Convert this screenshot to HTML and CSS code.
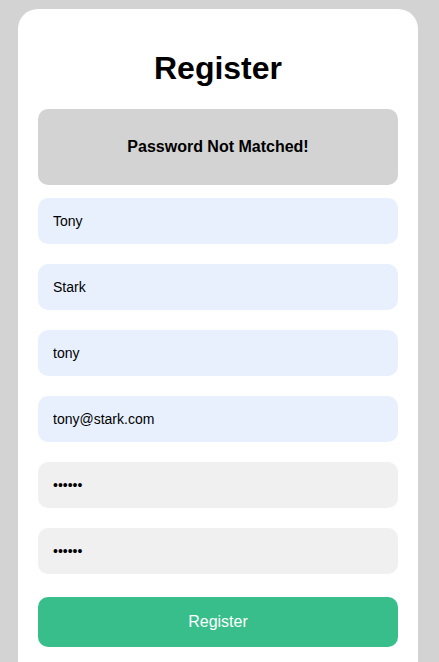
FILE: index.html
```html
<!DOCTYPE html>
<html>
<head>
<meta charset="utf-8">
<link rel="stylesheet" href="styles.css">
</head>
<body>
<div class="card">
  <h1 class="title">Register</h1>
  <div class="alert">Password Not Matched!</div>
  <form class="form">
    <input class="field filled" type="text" value="Tony">
    <input class="field filled" type="text" value="Stark">
    <input class="field filled" type="text" value="tony">
    <input class="field filled" type="email" value="tony@stark.com">
    <input class="field" type="password" value="tonyst">
    <input class="field" type="password" value="tonyst">
    <button class="btn" type="button">Register</button>
  </form>
</div>
</body>
</html>
```

FILE: styles.css
```css
html, body {
  margin: 0;
  padding: 0;
  background: #d3d3d3;
  font-family: "Liberation Sans", Arial, sans-serif;
}
body {
  height: 662px;
  overflow: hidden;
}
.card {
  box-sizing: border-box;
  width: 400px;
  height: 653px;
  margin: 9px 0 0 18px;
  padding: 20px 20px 0;
  background: #fff;
  border-radius: 20px 20px 0 0;
}
.title {
  margin: 21px 0 0;
  height: 37px;
  line-height: 37px;
  font-size: 32px;
  font-weight: bold;
  text-align: center;
  color: #000;
}
.alert {
  margin-top: 22px;
  height: 76px;
  display: flex;
  align-items: center;
  justify-content: center;
  background: #d3d3d3;
  border-radius: 10px;
  font-size: 16px;
  font-weight: bold;
  color: #000;
}
.form {
  display: flex;
  flex-direction: column;
  margin-top: 13px;
}
.field {
  box-sizing: border-box;
  height: 46px;
  margin: 0 0 20px;
  padding: 0 15px;
  border: none;
  border-radius: 10px;
  background: #f0f0f0;
  font-family: "Liberation Sans", Arial, sans-serif;
  font-size: 14px;
  color: #000;
  outline: none;
}
.field.filled {
  background: #e8f0fe;
}
.btn {
  margin-top: 3px;
  height: 50px;
  border: none;
  border-radius: 10px;
  background: #37be8a;
  color: #fff;
  font-family: "Liberation Sans", Arial, sans-serif;
  font-size: 16px;
}
```
